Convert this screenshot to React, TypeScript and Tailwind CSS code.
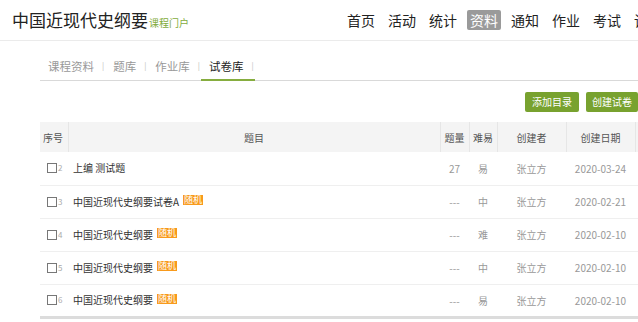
import React from "react";

const navItems = ["首页", "活动", "统计", "资料", "通知", "作业", "考试", "讨论"];
const tabs = ["课程资料", "题库", "作业库", "试卷库"];

type Row = { no: number; title: string; random: boolean; count: string; level: string; author: string; date: string };

const rows: Row[] = [
  { no: 2, title: "上编 测试题", random: false, count: "27", level: "易", author: "张立方", date: "2020-03-24" },
  { no: 3, title: "中国近现代史纲要试卷A", random: true, count: "---", level: "中", author: "张立方", date: "2020-02-21" },
  { no: 4, title: "中国近现代史纲要", random: true, count: "---", level: "难", author: "张立方", date: "2020-02-10" },
  { no: 5, title: "中国近现代史纲要", random: true, count: "---", level: "中", author: "张立方", date: "2020-02-10" },
  { no: 6, title: "中国近现代史纲要", random: true, count: "---", level: "易", author: "张立方", date: "2020-02-10" },
];

export default function App() {
  return (
    <div
      className="w-[638px] h-[322px] overflow-hidden bg-white text-[#333]"
      style={{ fontFamily: '"Noto Sans CJK SC", "Noto Sans", sans-serif' }}
    >
      {/* top header */}
      <header className="h-[41px] border-b border-[#ebebeb] flex items-center pl-[12px]">
        <div className="flex items-end w-[332px] shrink-0">
          <span className="text-[17px] leading-[20px] text-[#222]">中国近现代史纲要</span>
          <span className="text-[10px] leading-[14px] text-[#7fab3c] ml-[1px]">课程门户</span>
        </div>
        <nav className="flex gap-[7px] whitespace-nowrap shrink-0">
          {navItems.map((n) => (
            <span
              key={n}
              className={
                n === "资料"
                  ? "px-[3px] h-[20px] leading-[20px] text-[14px] rounded-[2px] bg-[#9a9a9a] text-white"
                  : "px-[3px] h-[20px] leading-[20px] text-[14px] text-[#222]"
              }
            >
              {n}
            </span>
          ))}
        </nav>
      </header>

      <div className="pl-[40px]">
        {/* tabs */}
        <div className="mt-[11px] flex border-b border-[#d9d9d9] h-[29px]">
          {tabs.map((t) => (
            <div
              key={t}
              className={
                t === "试卷库"
                  ? "flex items-center pl-[8px] pr-[1px] border-b-2 border-[#86ad3f] -mb-[1px] text-[#222]"
                  : "flex items-center pl-[8px] pr-[1px] text-[#999]"
              }
            >
              <span className="text-[11.5px] leading-[16px]">{t}</span>
              <span className="ml-[8px] text-[#bbb] text-[8px] leading-[10px]">|</span>
            </div>
          ))}
        </div>

        {/* buttons */}
        <div className="w-[598px] flex justify-end gap-[7px] mt-[11px]">
          <button className="h-[20px] px-[7px] rounded-[2px] bg-[#78a22f] text-white text-[10px] leading-[20px]">添加目录</button>
          <button className="h-[20px] px-[6px] rounded-[2px] bg-[#78a22f] text-white text-[10px] leading-[20px]">创建试卷</button>
        </div>

        {/* table */}
        <table className="mt-[10px] w-[660px] table-fixed border-collapse text-[10px]">
          <colgroup>
            <col className="w-[28px]" />
            <col className="w-[372px]" />
            <col className="w-[29px]" />
            <col className="w-[28px]" />
            <col className="w-[69px]" />
            <col className="w-[69px]" />
            <col className="w-[65px]" />
          </colgroup>
          <thead>
            <tr className="h-[30px] bg-[#f4f4f4] text-[#555]">
              <th className="font-normal text-left pl-[3px] border-r border-[#e6e6e6]">序号</th>
              <th className="font-normal border-r border-[#e6e6e6]">题目</th>
              <th className="font-normal border-r border-[#e6e6e6]">题量</th>
              <th className="font-normal border-r border-[#e6e6e6]">难易</th>
              <th className="font-normal border-r border-[#e6e6e6]">创建者</th>
              <th className="font-normal border-r border-[#e6e6e6]">创建日期</th>
              <th className="font-normal" />
            </tr>
          </thead>
          <tbody>
            {rows.map((r, i) => (
              <tr
                key={r.no}
                className={
                  i === rows.length - 1
                    ? "h-[33px] border-b-[3px] border-[#dcdcdc]"
                    : "h-[33px] border-b border-[#efefef]"
                }
              >
                <td className="pl-[7px]">
                  <div className="flex items-center">
                    <span className="w-[10px] h-[10px] border border-[#777] bg-white inline-block" />
                    <span className="text-[8px] text-[#aaa] ml-[1px] leading-[10px]">{r.no}</span>
                  </div>
                </td>
                <td className="pl-[5px] text-[#333]">
                  <div className="flex items-center">
                    <span className="leading-[14px]">{r.title}</span>
                    {r.random && (
                      <span className="ml-[4px] -mt-[3px] bg-[#f89a1c] text-white text-[9px] leading-[10px] px-[1px]">
                        随机
                      </span>
                    )}
                  </div>
                </td>
                <td className="text-center text-[#999]">{r.count}</td>
                <td className="text-center text-[#999]">{r.level}</td>
                <td className="text-center text-[#999]">{r.author}</td>
                <td className="text-center text-[#999]">{r.date}</td>
                <td />
              </tr>
            ))}
          </tbody>
        </table>
      </div>
    </div>
  );
}
